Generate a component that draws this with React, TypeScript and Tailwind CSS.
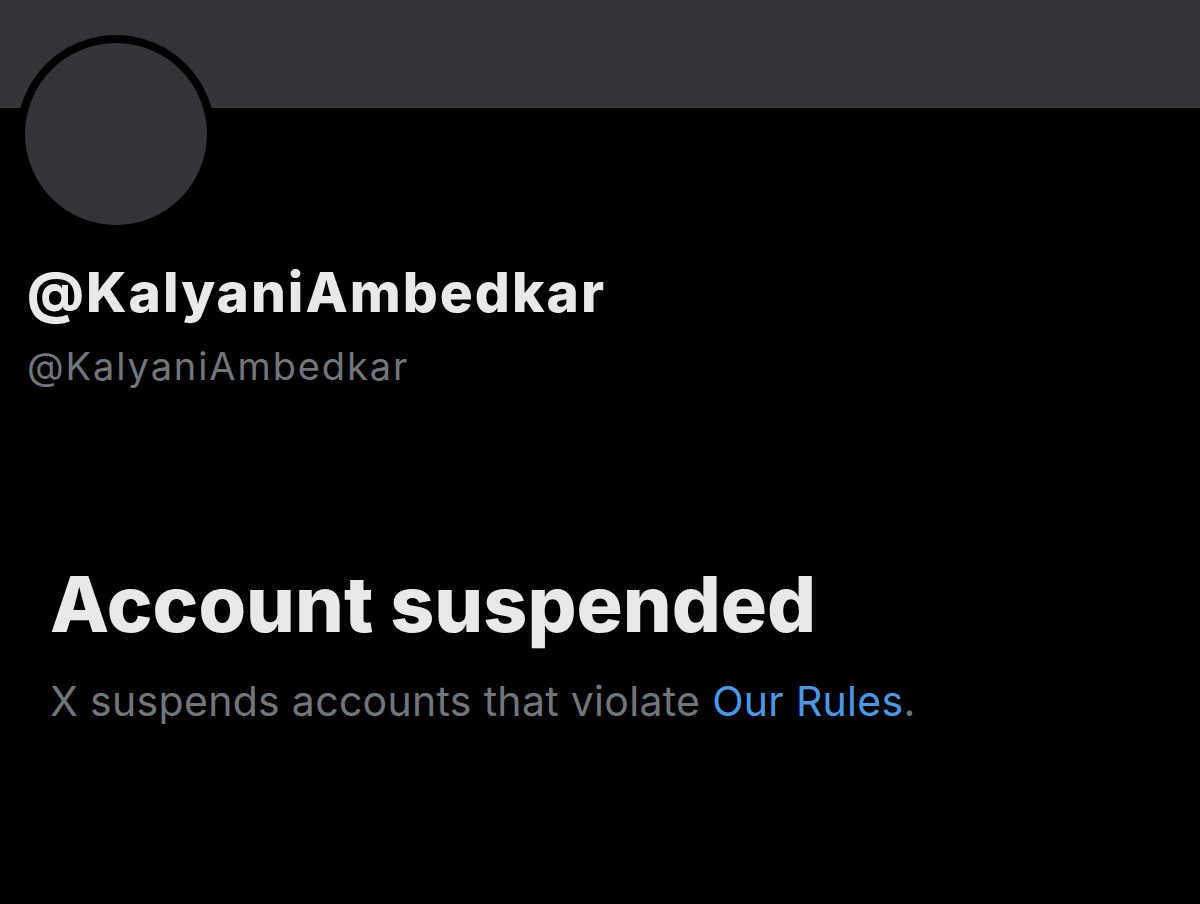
import React from 'react';

const App: React.FC = () => {
  return (
    <div className="w-[1200px] h-[904px] bg-black overflow-hidden" style={{ fontFamily: 'Inter, "Noto Sans", sans-serif' }}>
      <div className="h-[108px] bg-[#333438]" />
      <div className="px-[17px] -mt-[73px]">
        <div className="w-[198px] h-[198px] rounded-full bg-black p-[8px]">
          <div className="w-full h-full rounded-full bg-[#333438]" />
        </div>
      </div>
      <div className="pl-[27px] mt-[32px]">
        <h1 className="text-[55px] leading-[55px] font-extrabold text-[#e7e9ea] tracking-[2px]">@KalyaniAmbedkar</h1>
        <p className="text-[38px] leading-[38px] text-[#71767b] mt-[27px] tracking-[1.9px]">@KalyaniAmbedkar</p>
      </div>
      <div className="pl-[50px] mt-[181px]">
        <h2 className="text-[77px] leading-[77px] font-extrabold text-[#e7e9ea] tracking-[0px]">Account suspended</h2>
        <p className="text-[41px] leading-[41px] text-[#71767b] mt-[38px] tracking-[0.3px]">
          X suspends accounts that violate <span className="text-[#4a99e9]">Our Rules</span>.
        </p>
      </div>
    </div>
  );
};

export default App;
